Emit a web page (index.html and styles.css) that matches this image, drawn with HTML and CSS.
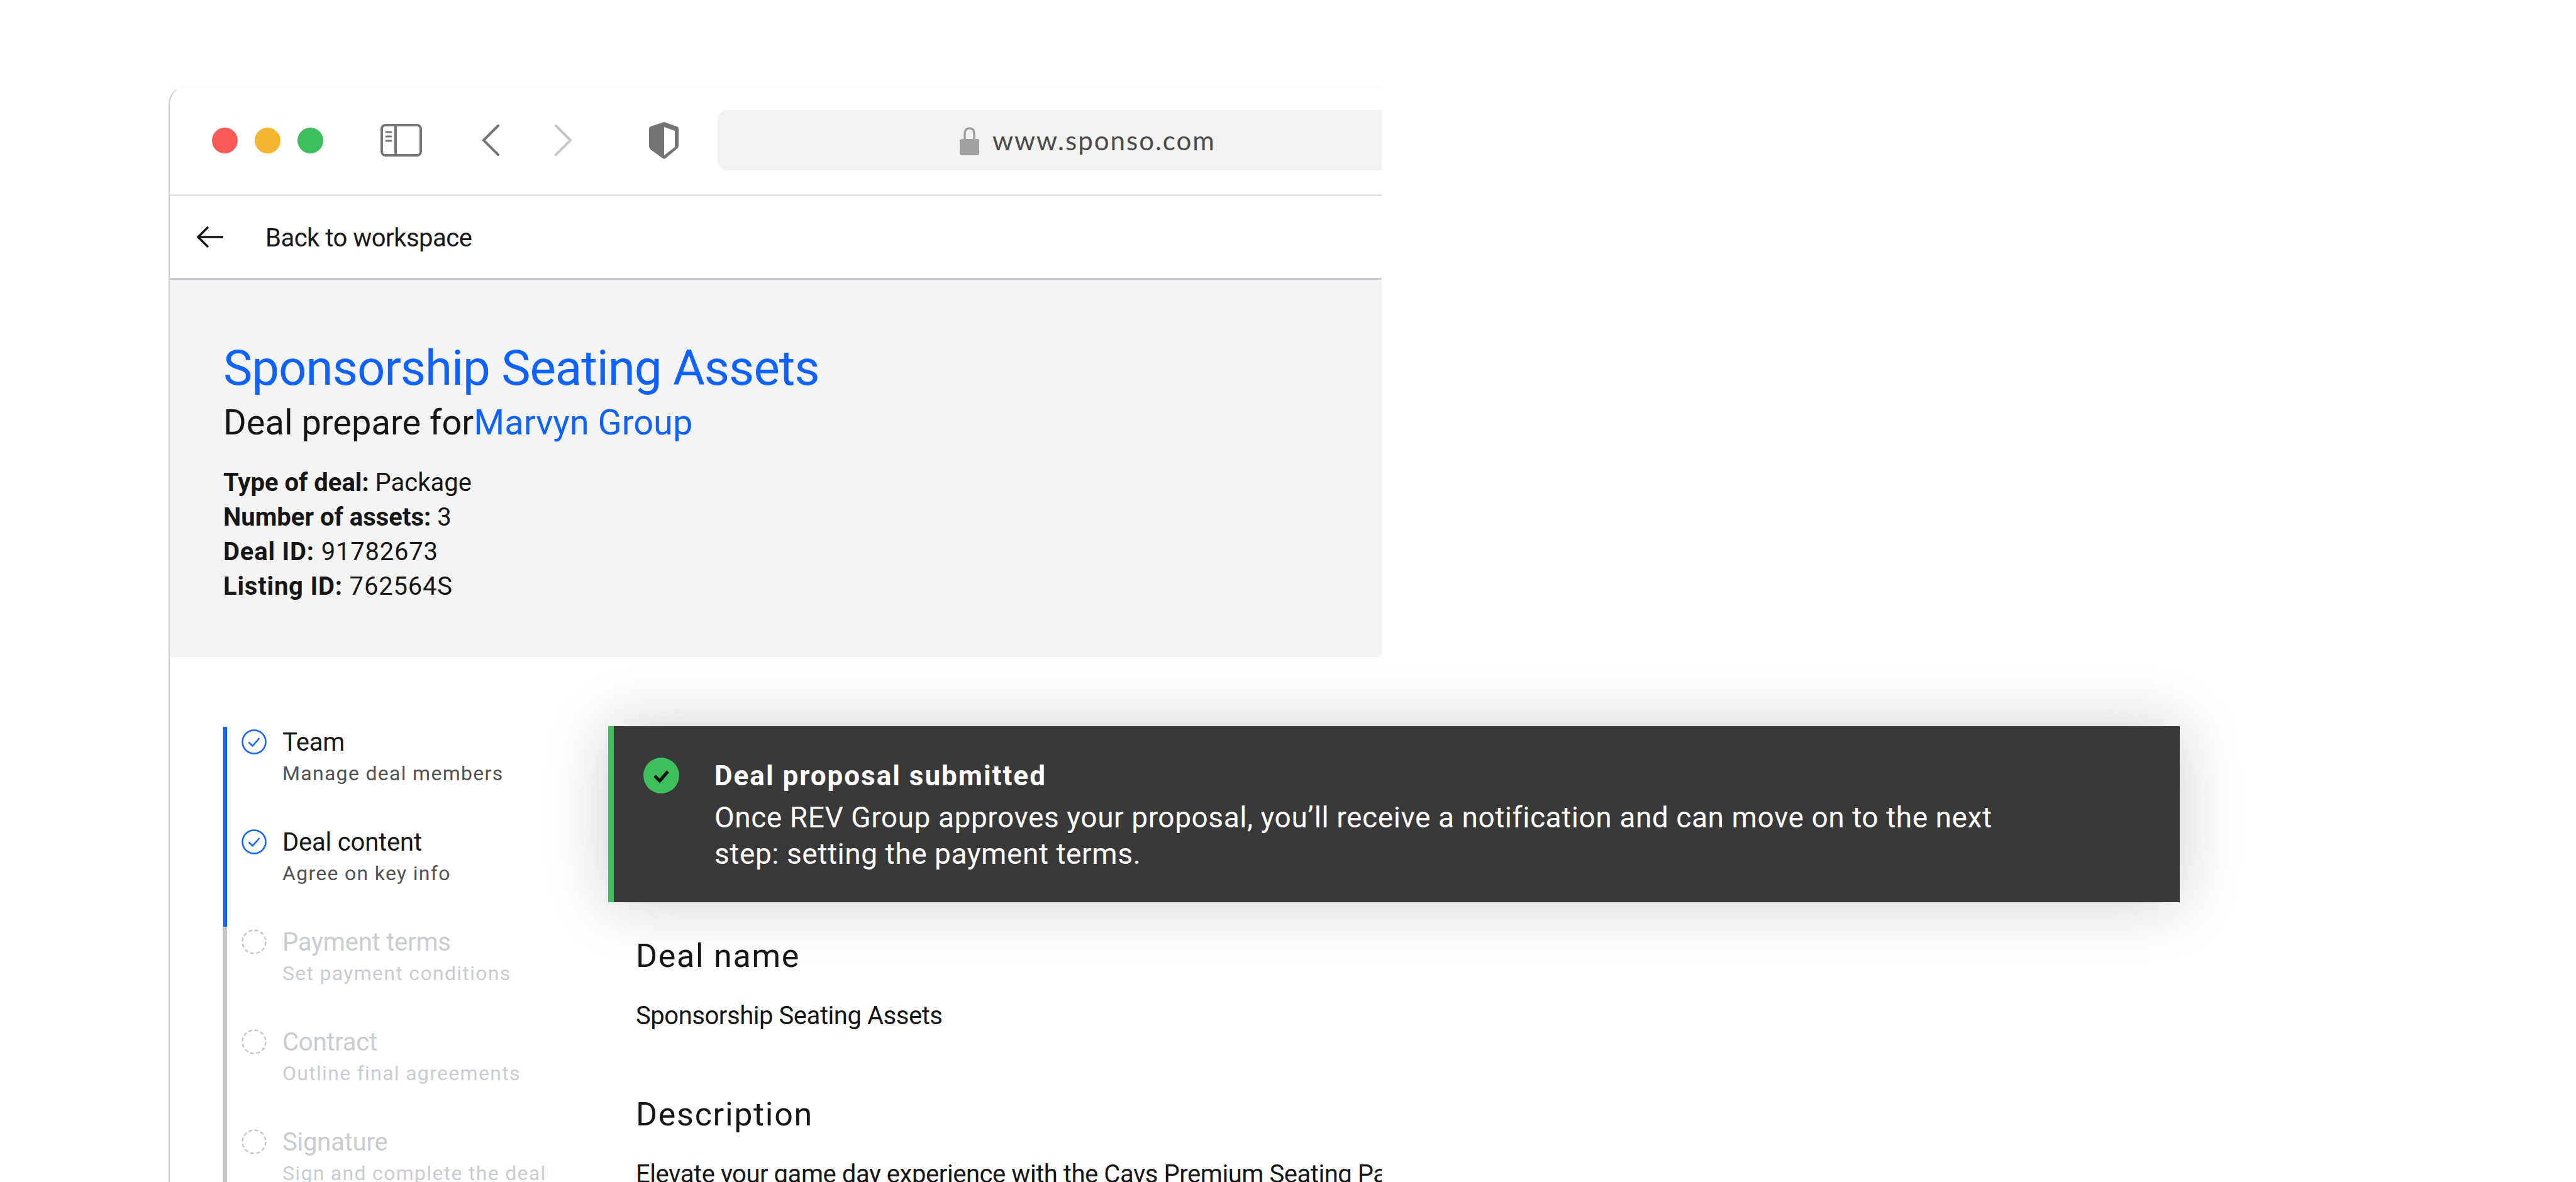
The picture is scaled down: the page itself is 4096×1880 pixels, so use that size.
FILE: index.html
```html
<!DOCTYPE html>
<html lang="en">
<head>
    <meta charset="UTF-8">
    <title>Sponsorship Seating Assets</title>
    <link rel="stylesheet" href="styles.css">
</head>
<body>
    <div class="window">
        <div class="chrome">
            <div class="lights">
                <span class="light light-red"></span>
                <span class="light light-yellow"></span>
                <span class="light light-green"></span>
            </div>
            <svg class="icon-sidebar" viewBox="0 0 66 52" fill="none" stroke="#757575" stroke-width="4">
                <rect x="2" y="2" width="62" height="48" rx="6"/>
                <path d="M24 2V50"/>
                <path d="M9 13H17M9 20H17M9 27H17" stroke-width="3" stroke-linecap="round"/>
            </svg>
            <svg class="icon-back" viewBox="0 0 27 50" fill="none" stroke="#757575" stroke-width="4" stroke-linecap="round" stroke-linejoin="round">
                <path d="M25 2L2 25L25 48"/>
            </svg>
            <svg class="icon-forward" viewBox="0 0 27 50" fill="none" stroke="#c6c6cc" stroke-width="4" stroke-linecap="round" stroke-linejoin="round">
                <path d="M2 2L25 25L2 48"/>
            </svg>
            <svg class="icon-shield" viewBox="0 0 47 59">
                <path d="M24 0L44 7Q47 8 47 11V38Q47 41 44 43L26 58Q24 59 22 58L4 45Q0 42 0 38V11Q0 8 3 7Z" fill="#757575"/>
                <path d="M24 8L41 14V40L24 53Z" fill="#fff"/>
            </svg>
            <div class="url-bar">
                <svg class="icon-lock" viewBox="0 0 31 45">
                    <path d="M8 22V11C8 5 11 2 15.500 2S23 5 23 11V22" fill="none" stroke="#a0a0a0" stroke-width="3.500"/>
                    <rect x="0" y="19" width="31" height="26" rx="3" fill="#a0a0a0"/>
                </svg>
                <span class="url-text">www.sponso.com</span>
            </div>
        </div>

        <div class="back-row">
            <svg class="icon-arrow" viewBox="0 0 42 34" fill="none" stroke="#161616" stroke-width="3.500">
                <path d="M18 1L2 17L18 33"/>
                <path d="M2 17H42"/>
            </svg>
            <span class="back-label">Back to workspace</span>
        </div>

        <div class="deal-header">
            <h1 class="deal-title">Sponsorship Seating Assets</h1>
            <div class="deal-sub">Deal prepare for<span class="link">Marvyn Group</span></div>
            <div class="deal-meta">
                <div><b>Type of deal:</b> Package</div>
                <div><b>Number of assets:</b> 3</div>
                <div class="meta-id"><b>Deal ID:</b> 91782673</div>
                <div class="meta-id"><b>Listing ID:</b> 762564S</div>
            </div>
        </div>

        <div class="deal-body">
            <div class="steps">
                <div class="step step-done">
                    <svg class="step-icon" viewBox="0 0 40 40" fill="none" stroke="#0f62fe" stroke-width="2.500">
                        <circle cx="20" cy="20" r="18.500"/>
                        <path d="M11.500 20.500L17.500 26.500L28.500 14"/>
                    </svg>
                    <div>
                        <div class="step-title">Team</div>
                        <div class="step-desc">Manage deal members</div>
                    </div>
                </div>
                <div class="step step-done">
                    <svg class="step-icon" viewBox="0 0 40 40" fill="none" stroke="#0f62fe" stroke-width="2.500">
                        <circle cx="20" cy="20" r="18.500"/>
                        <path d="M11.500 20.500L17.500 26.500L28.500 14"/>
                    </svg>
                    <div>
                        <div class="step-title">Deal content</div>
                        <div class="step-desc">Agree on key info</div>
                    </div>
                </div>
                <div class="step step-todo">
                    <svg class="step-icon" viewBox="0 0 40 40" fill="none" stroke="#c6c6cc" stroke-width="2.500" stroke-dasharray="6 3.700">
                        <circle cx="20" cy="20" r="18.500"/>
                    </svg>
                    <div>
                        <div class="step-title">Payment terms</div>
                        <div class="step-desc">Set payment conditions</div>
                    </div>
                </div>
                <div class="step step-todo">
                    <svg class="step-icon" viewBox="0 0 40 40" fill="none" stroke="#c6c6cc" stroke-width="2.500" stroke-dasharray="6 3.700">
                        <circle cx="20" cy="20" r="18.500"/>
                    </svg>
                    <div>
                        <div class="step-title">Contract</div>
                        <div class="step-desc">Outline final agreements</div>
                    </div>
                </div>
                <div class="step step-todo">
                    <svg class="step-icon" viewBox="0 0 40 40" fill="none" stroke="#c6c6cc" stroke-width="2.500" stroke-dasharray="6 3.700">
                        <circle cx="20" cy="20" r="18.500"/>
                    </svg>
                    <div>
                        <div class="step-title">Signature</div>
                        <div class="step-desc">Sign and complete the deal</div>
                    </div>
                </div>
            </div>

            <div class="deal-main">
                <h2 class="section-title">Deal name</h2>
                <p class="section-text">Sponsorship Seating Assets</p>
                <h2 class="section-title section-next">Description</h2>
                <p class="section-text">Elevate your game day experience with the Cavs Premium Seating Package</p>
            </div>
        </div>
    </div>

    <div class="toast">
        <svg class="toast-icon" viewBox="0 0 57 57">
            <circle cx="28.500" cy="28.500" r="28.500" fill="#3dc05c"/>
            <path d="M18 29L26 37L39 22" fill="none" stroke="#111" stroke-width="5"/>
        </svg>
        <div class="toast-text">
            <div class="toast-title">Deal proposal submitted</div>
            <div class="toast-body">Once REV Group approves your proposal, you’ll receive a notification and can move on to the next step: setting the payment terms.</div>
        </div>
    </div>
</body>
</html>
```

FILE: styles.css
```css
html, body {
    margin: 0;
    height: 1880px;
    overflow: hidden;
    background-color: #fff;
}
body {
    position: relative;
    font-family: Roboto, "Noto Sans", sans-serif;
    color: #161616;
}
.window {
    box-sizing: border-box;
    width: 1929px;
    height: 1744px;
    margin-left: 268px;
    margin-top: 136px;
    position: absolute;
    border-left: 2px solid #d0d0d0;
    border-top: 1px solid #fafafa;
    border-top-left-radius: 30px;
    overflow: hidden;
}

/* browser chrome */
.chrome {
    box-sizing: border-box;
    height: 175px;
    display: flex;
    align-items: center;
    padding-left: 67px;
    border-bottom: 3px solid #e2e2e2;
}
.lights {
    display: flex;
    gap: 27px;
}
.light {
    width: 41px;
    height: 41px;
    border-radius: 50%;
}
.light-red { background-color: #fa5a55; }
.light-yellow { background-color: #f5b52e; }
.light-green { background-color: #3dc05c; }
.icon-sidebar {
    width: 66px;
    height: 52px;
    margin-left: 91px;
}
.icon-back {
    width: 27px;
    height: 50px;
    margin-left: 96px;
}
.icon-forward {
    width: 27px;
    height: 50px;
    margin-left: 88px;
}
.icon-shield {
    width: 47px;
    height: 59px;
    margin-left: 123px;
}
.url-bar {
    flex: 1;
    height: 96px;
    margin-left: 62px;
    padding-left: 385px;
    display: flex;
    align-items: center;
    gap: 21px;
    background-color: #f2f2f2;
    border-radius: 16px 0 0 16px;
}
.icon-lock {
    width: 31px;
    height: 45px;
    margin-top: 2px;
}
.url-text {
    font-family: Lato, sans-serif;
    font-size: 42px;
    letter-spacing: 2px;
    color: #4a4a4a;
}

.back-row {
    box-sizing: border-box;
    height: 133px;
    display: flex;
    align-items: center;
    gap: 67px;
    padding-left: 43px;
    font-size: 40px;
    letter-spacing: -0.5px;
    border-bottom: 3px solid #c9ccd3;
}
.icon-arrow {
    width: 42px;
    height: 34px;
}
.back-label {
    margin-top: 3px;
}

/* header */
.deal-header {
    box-sizing: border-box;
    height: 600px;
    padding: 91px 0 0 85px;
    background-color: #f4f4f4;
}
.deal-title {
    margin: 0;
    font-size: 78px;
    line-height: 100px;
    font-weight: 400;
    letter-spacing: -1px;
    color: #0f62fe;
}
.deal-sub {
    margin-top: 1px;
    font-size: 56px;
    line-height: 70px;
}
.link {
    color: #0f62fe;
}
.deal-meta {
    margin-top: 33px;
    font-size: 40px;
    line-height: 55px;
}
.deal-meta b {
    font-weight: 700;
}
.meta-id {
    letter-spacing: 0.8px;
}

/* steps and content */
.deal-body {
    display: flex;
    padding-left: 85px;
}
.steps {
    width: 656px;
    flex-shrink: 0;
    padding-top: 111px;
}
.step {
    box-sizing: border-box;
    height: 159px;
    display: flex;
    gap: 25px;
    padding-left: 23px;
    border-left: 6px solid #c6c6cc;
}
.step-done {
    border-left-color: #0f62fe;
}
.step-icon {
    width: 40px;
    height: 40px;
    margin-top: 4px;
    flex-shrink: 0;
}
.step-title {
    margin-top: 2px;
    font-size: 40px;
    line-height: 46px;
    letter-spacing: -0.2px;
}
.step-desc {
    margin-top: 3px;
    font-size: 32px;
    line-height: 46px;
    letter-spacing: 1.3px;
    color: #525252;
}
.step-todo .step-title,
.step-todo .step-desc {
    color: #c9ccd3;
}
.deal-main {
    padding-top: 444px;
    white-space: nowrap;
}
.section-title {
    margin: 0;
    font-size: 52px;
    line-height: 64px;
    font-weight: 400;
    letter-spacing: 1.7px;
}
.section-next {
    margin-top: 97px;
}
.section-text {
    margin: 35px 0 0;
    font-size: 40px;
    line-height: 56px;
    letter-spacing: -0.45px;
}

/* toast */
.toast {
    position: absolute;
    left: 967px;
    top: 1155px;
    box-sizing: border-box;
    width: 2499px;
    height: 280px;
    display: flex;
    gap: 56px;
    padding: 50px 0 0 47px;
    background-color: #393939;
    border-left: 9px solid #3dc05c;
    box-shadow: 0 0 100px rgba(0,0,0,0.2);
    color: #fff;
}
.toast-icon {
    width: 57px;
    height: 57px;
    flex-shrink: 0;
}
.toast-text {
    width: 2100px;
}
.toast-title {
    font-size: 44px;
    line-height: 58px;
    font-weight: 700;
    letter-spacing: 2px;
}
.toast-body {
    margin-top: 8px;
    font-size: 46px;
    line-height: 58px;
    letter-spacing: 0.57px;
}
```
